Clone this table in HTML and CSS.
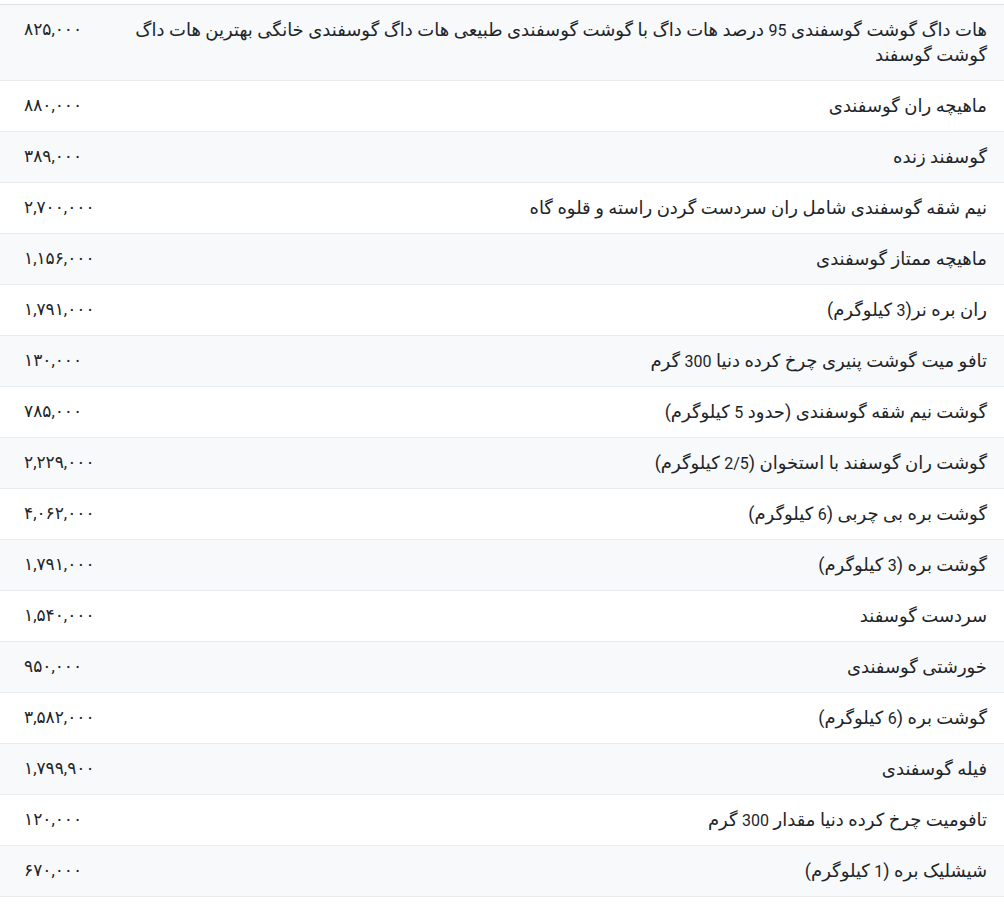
FILE: index.html
```html
<!DOCTYPE html>
<html lang="fa" dir="rtl">
<head>
<meta charset="utf-8">
<link rel="stylesheet" href="styles.css">
</head>
<body>
<table class="price-table">
<tbody>
<tr><td class="name">هات داگ گوشت گوسفندی <span class="lat">95</span> درصد هات داگ با گوشت گوسفندی طبیعی هات داگ گوسفندی خانگی بهترین هات داگ گوشت گوسفند</td><td class="price">۸۲۵,۰۰۰</td></tr>
<tr><td class="name">ماهیچه ران گوسفندی</td><td class="price">۸۸۰,۰۰۰</td></tr>
<tr><td class="name">گوسفند زنده</td><td class="price">۳۸۹,۰۰۰</td></tr>
<tr><td class="name">نیم شقه گوسفندی شامل ران سردست گردن راسته و قلوه گاه</td><td class="price">۲,۷۰۰,۰۰۰</td></tr>
<tr><td class="name">ماهیچه ممتاز گوسفندی</td><td class="price">۱,۱۵۶,۰۰۰</td></tr>
<tr><td class="name">ران بره نر(<span class="lat">3</span> کیلوگرم)</td><td class="price">۱,۷۹۱,۰۰۰</td></tr>
<tr><td class="name">تافو میت گوشت پنیری چرخ کرده دنیا <span class="lat">300</span> گرم</td><td class="price">۱۳۰,۰۰۰</td></tr>
<tr><td class="name">گوشت نیم شقه گوسفندی (حدود <span class="lat">5</span> کیلوگرم)</td><td class="price">۷۸۵,۰۰۰</td></tr>
<tr><td class="name">گوشت ران گوسفند با استخوان (<span class="lat">2/5</span> کیلوگرم)</td><td class="price">۲,۲۲۹,۰۰۰</td></tr>
<tr><td class="name">گوشت بره بی چربی (<span class="lat">6</span> کیلوگرم)</td><td class="price">۴,۰۶۲,۰۰۰</td></tr>
<tr><td class="name">گوشت بره (<span class="lat">3</span> کیلوگرم)</td><td class="price">۱,۷۹۱,۰۰۰</td></tr>
<tr><td class="name">سردست گوسفند</td><td class="price">۱,۵۴۰,۰۰۰</td></tr>
<tr><td class="name">خورشتی گوسفندی</td><td class="price">۹۵۰,۰۰۰</td></tr>
<tr><td class="name">گوشت بره (<span class="lat">6</span> کیلوگرم)</td><td class="price">۳,۵۸۲,۰۰۰</td></tr>
<tr><td class="name">فیله گوسفندی</td><td class="price">۱,۷۹۹,۹۰۰</td></tr>
<tr><td class="name">تافومیت چرخ کرده دنیا مقدار <span class="lat">300</span> گرم</td><td class="price">۱۲۰,۰۰۰</td></tr>
<tr><td class="name">شیشلیک بره (<span class="lat">1</span> کیلوگرم)</td><td class="price">۶۷۰,۰۰۰</td></tr>
</tbody>
</table>
</body>
</html>
```

FILE: styles.css
```css
html, body {
  margin: 0;
  padding: 0;
  background: #ffffff;
}
body {
  font-family: Roboto, "DejaVu Sans", sans-serif;
  font-size: 18px;
  color: #212529;
  padding-top: 4px;
}
.price-table {
  width: 100%;
  border-collapse: collapse;
  border-top: 1px solid #dee2e6;
}
.price-table tr {
  border-bottom: 1px solid #e9ecef;
}
.price-table tr:nth-child(odd) {
  background: #f8f9fa;
}
.price-table td {
  padding: 12px 0 13px;
  line-height: 25px;
  vertical-align: top;
}
.price-table .name {
  text-align: right;
  padding-right: 17px;
  padding-left: 10px;
}
.price-table .lat {
  font-size: 16px;
  line-height: 1;
}
.price-table .price {
  text-align: left;
  direction: ltr;
  font-size: 17px;
  width: 80px;
  padding-left: 24px;
  white-space: nowrap;
}
```
